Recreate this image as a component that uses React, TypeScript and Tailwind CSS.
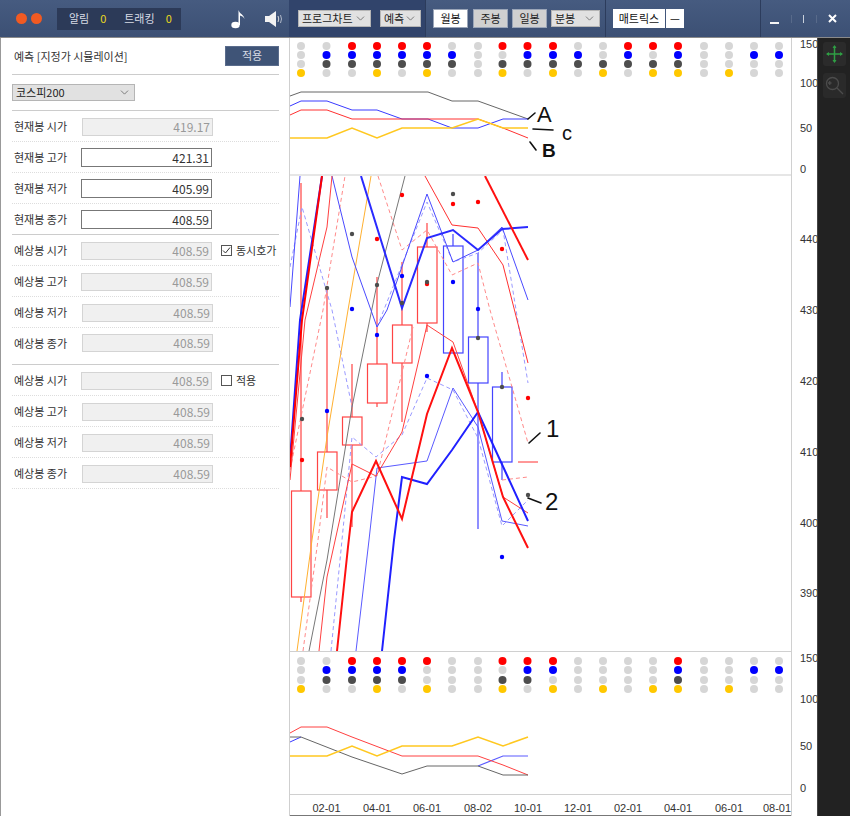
import { ChevronDown } from "lucide-react";

const FONT = "font-['Noto_Sans_CJK_KR','Liberation_Sans',sans-serif]";

type Line = { pts: string; color: string; w?: number; dash?: boolean; o?: number };

const COLS = [301, 326.5, 352, 377, 402, 427, 452, 478, 502.5, 527.5, 553, 578, 603, 628, 653, 678, 704, 729, 754, 779];

const C: Record<string, string> = { g: "#d6d6d6", r: "#ff0000", b: "#0000ff", d: "#4d4d4d", y: "#ffc800" };

const TOP_DOTS: [number, string][] = [
  [46, "ggrrrrggrrrggrrrgggg"],
  [55, "gbbbbbbggbbbgbgbggbb"],
  [64, "gddddddgddddddddgggg"],
  [73, "yggygyggygygygyygygg"],
];

const BOTTOM_DOTS: [number, string][] = [
  [661, "ggrrrrggrrrggggrgggg"],
  [670, "gbbbbggggbbggggbggbb"],
  [680, "gddddgggddgggggdgggg"],
  [689, "yggygyggygygygyygygg"],
];

const TOP_LINES: Line[] = [
  { pts: "290,96 301,92 428,92 452,101 478,101 528,119", color: "#666666" },
  { pts: "290,106 301,101 327,101 352,110 377,110 402,119 428,119 452,128 478,128 503,119 528,119", color: "#3a3aff" },
  { pts: "290,115 301,110 327,110 352,119 478,119 503,128 528,138", color: "#ff3030" },
  { pts: "290,138 327,138 352,128 377,138 402,128 452,128 478,119 503,128 528,128", color: "#ffc820", w: 1.6 },
];

const BOTTOM_LINES: Line[] = [
  { pts: "290,742 301,737", color: "#3a3aff" },
  { pts: "478,766 503,756 528,756", color: "#5a5aff", w: 1.2 },
  { pts: "290,733 301,727 327,727 352,737 402,756 478,756 503,765 528,775", color: "#ff4040" },
  { pts: "290,737 301,737 352,757 402,774 427,766 478,766 503,775 528,775", color: "#666666" },
  { pts: "290,756 327,756 352,746 377,756 402,746 452,746 478,737 503,746 528,737", color: "#ffc820", w: 1.6 },
];

const MAIN_LINES: Line[] = [
  // 점선
  { pts: "378,176 402,250 427,230 452,275 478,263 490,310 528,443", color: "#ff8a8a", dash: true },
  { pts: "290,470 323,310 345,176", color: "#ff8a8a", dash: true },
  { pts: "303,651 318,540 327,467 352,482 377,476 413,327", color: "#ff8a8a", dash: true },
  { pts: "502,480 528,477", color: "#ff8a8a", dash: true },
  { pts: "331,651 342,540 352,437 376,457 402,435 427,378 453,390 478,438 502,526 528,500", color: "#9a9aff", dash: true },
  { pts: "290,267 302,207 332,310 352,407", color: "#9a9aff", dash: true },
  { pts: "377,327 427,202 453,262 478,253 503,230 528,383", color: "#9a9aff", dash: true },
  // 실선
  { pts: "297,651 312,540 327,437 348,310 371,176", color: "#ffb030" },
  { pts: "309,651 327,560 352,407 377,284 405,176", color: "#777777" },
  { pts: "290,307 300,176", color: "#4a4aff" },
  { pts: "332,176 352,257 377,327 387,310 427,194 453,262 478,250 502,227 528,300", color: "#4a4aff" },
  { pts: "356,651 369,540 377,468 427,461 453,388 478,427 502,521 528,526", color: "#5a5aff" },
  { pts: "319,651 327,577 352,464 376,476 402,432 427,325 453,342 478,412 503,497 528,513", color: "#ff4040" },
  { pts: "290,480 305,320 327,227 332,176", color: "#ff4040" },
  { pts: "425,176 452,225 478,228 503,265 517,320 528,363", color: "#ff3030" },
  { pts: "290,460 300,320 322,176", color: "#2020ff", w: 2 },
  { pts: "290,467 302,320 322,176", color: "#ff0000", w: 2 },
  { pts: "361,176 402,308 427,238 453,230 478,250 502,229 528,227", color: "#2a2aff", w: 2 },
  { pts: "382,651 394,540 402,477 427,484 452,450 478,412 528,521", color: "#2020ff", w: 2 },
  { pts: "337,651 348,547 352,512 376,461 402,519 427,414 452,348 478,412 503,497 528,548", color: "#ff1010", w: 2 },
  { pts: "485,176 528,260", color: "#ff1010", w: 2 },
];

// x, 몸통 위, 몸통 아래, 꼬리 위, 꼬리 아래
const CANDLES: [number, number, number, number, number, string][] = [
  [301, 491, 597, 183, 602, "#ff3030"],
  [327, 452, 490, 287, 518, "#ff3030"],
  [352, 417, 445, 364, 527, "#ff3030"],
  [377, 364, 403, 277, 407, "#ff3030"],
  [402, 325, 363, 262, 422, "#ff3030"],
  [427, 247, 323, 223, 332, "#ff3030"],
  [453, 246, 353, 234, 353, "#3030ff"],
  [478, 337, 383, 253, 529, "#3030ff"],
  [502, 387, 462, 372, 480, "#3030ff"],
];

const SCATTER: [number, number, string][] = [
  [402, 195, "r"], [453, 204, "r"], [478, 202, "r"], [377, 239, "r"], [502, 249, "r"], [427, 284, "r"], [302, 460, "r"], [528, 398, "r"],
  [453, 194, "d"], [352, 234, "d"], [327, 288, "d"], [377, 285, "d"], [427, 282, "d"], [402, 303, "d"], [302, 419, "d"], [478, 338, "d"], [502, 387, "d"], [528, 495, "d"],
  [402, 276, "b"], [453, 282, "b"], [352, 309, "b"], [478, 309, "b"], [377, 335, "b"], [327, 411, "b"], [427, 376, "b"], [502, 557, "b"],
];

const AXIS: [number, string][] = [
  [44, "150"], [83, "100"], [128, "50"], [169, "0"],
  [239, "440"], [310, "430"], [381, "420"], [452, "410"], [523, "400"], [593, "390"],
  [658, "150"], [699, "100"], [746, "50"], [788, "0"],
];

const DATES: [number, string][] = [
  [326.5, "02-01"], [377, "04-01"], [427, "06-01"], [478, "08-02"], [528, "10-01"], [578, "12-01"],
  [628, "02-01"], [678, "04-01"], [729, "06-01"], [777, "08-01"],
];

function Polylines({ lines }: { lines: Line[] }) {
  return (
    <>
      {lines.map((l, i) => (
        <polyline
          key={i}
          points={l.pts}
          fill="none"
          stroke={l.color}
          strokeWidth={l.w ?? 1}
          strokeDasharray={l.dash ? "4 3" : undefined}
        />
      ))}
    </>
  );
}

function DotRows({ rows }: { rows: [number, string][] }) {
  return (
    <>
      {rows.flatMap(([y, s]) =>
        COLS.map((x, i) => <circle key={`${y}-${i}`} cx={x} cy={y} r={4} fill={C[s[i]]} />)
      )}
    </>
  );
}

function Chart() {
  return (
    <svg width={527} height={778} viewBox="290 38 527 778" className="block shrink-0">
      <rect x={290} y={38} width={527} height={778} fill="#ffffff" />
      <DotRows rows={TOP_DOTS} />
      <Polylines lines={TOP_LINES} />
      <line x1={290} y1={175} x2={791} y2={175} stroke="#e6e6e6" strokeWidth={2} />

      <svg x={290} y={176} width={501} height={475} viewBox="290 176 501 475">
        {CANDLES.map(([x, top, bot, wt, wb, c], i) => (
          <g key={i} stroke={c} strokeWidth={1.2} fill="none" opacity={0.9}>
            <line x1={x} y1={wt} x2={x} y2={top} />
            <line x1={x} y1={bot} x2={x} y2={wb} />
            <rect x={x - 9.5} y={top} width={19.5} height={bot - top} />
          </g>
        ))}
        <line x1={518} y1={462} x2={538} y2={462} stroke="#ff3030" />
        <Polylines lines={MAIN_LINES} />
        {SCATTER.map(([x, y, c], i) => (
          <circle key={i} cx={x} cy={y} r={2.2} fill={C[c]} />
        ))}
      </svg>

      <line x1={290} y1={651.5} x2={791} y2={651.5} stroke="#d0d0d0" />
      <DotRows rows={BOTTOM_DOTS} />
      <Polylines lines={BOTTOM_LINES} />
      <line x1={290} y1={794.5} x2={791} y2={794.5} stroke="#d0d0d0" />
      <line x1={290} y1={815.5} x2={791} y2={815.5} stroke="#777777" />
      <line x1={791.5} y1={38} x2={791.5} y2={816} stroke="#d0d0d0" />

      {AXIS.map(([y, t], i) => (
        <text key={i} x={800} y={y + 4} fontSize={11} fill="#333333" fontFamily="Liberation Sans, sans-serif">
          {t}
        </text>
      ))}
      {DATES.map(([x, t], i) => (
        <text key={i} x={x} y={812} fontSize={11} fill="#333333" textAnchor="middle" fontFamily="Liberation Sans, sans-serif">
          {t}
        </text>
      ))}

      {/* 손글씨 표시 */}
      <g stroke="#111111" strokeWidth={1.6} fill="none" strokeLinecap="round">
        <path d="M528 119 L535 113" />
        <path d="M533 129 L553 130" />
        <path d="M530 142 L536 150" />
        <path d="M529 443 L540 433" />
        <path d="M528 498 L541 503" />
      </g>
      <g fill="#111111" fontFamily="Liberation Sans, sans-serif">
        <text x={537} y={122} fontSize={22}>A</text>
        <text x={542} y={157} fontSize={19} fontWeight={700}>B</text>
        <text x={562} y={140} fontSize={20}>c</text>
        <text x={546} y={437} fontSize={24}>1</text>
        <text x={545} y={510} fontSize={24}>2</text>
      </g>
    </svg>
  );
}

function Select({ label, className }: { label: string; className: string }) {
  return (
    <div className={`flex items-center justify-between whitespace-nowrap bg-[#e1e1e1] border border-[#b5b5b5] pl-[3px] pr-[3px] text-[11px] text-[#222] ${className}`}>
      <span className="leading-none">{label}</span>
      <ChevronDown size={13} strokeWidth={1.5} className="text-[#666] shrink-0" />
    </div>
  );
}

function Divider() {
  return <div className="w-px h-full bg-[#2c3c5c]" />;
}

function PeriodButton({ label, active, className }: { label: string; active?: boolean; className: string }) {
  return (
    <div
      className={`h-[19px] flex items-center justify-center text-[11px] border border-[#9aa5b8] ${active ? "bg-white text-[#111]" : "bg-[#d0d0d0] text-[#222]"} ${className}`}
    >
      {label}
    </div>
  );
}

function Header() {
  return (
    <div className="flex h-[38px] shrink-0 border-b border-[#8a8a8a] bg-gradient-to-b from-[#465b80] to-[#3c5074]">
      <div className="w-[289px] shrink-0 flex items-center pl-[16px]">
        <div className="flex gap-[4px]">
          <div className="w-[11px] h-[11px] rounded-full bg-[#f15a22]" />
          <div className="w-[11px] h-[11px] rounded-full bg-[#f15a22]" />
        </div>
        <div className="ml-[15px] w-[124px] h-[22px] bg-[#2c3a58] flex items-center text-[11px] text-[#d8dce6] pl-[12px]">
          <span>알림</span>
          <span className="ml-[11px] w-[10px] text-[#e8d820]">0</span>
          <span className="ml-[14px]">트래킹</span>
          <span className="ml-[11px] text-[#e8d820]">0</span>
        </div>
        <svg width={16} height={20} viewBox="0 0 16 20" className="ml-[50px]">
          <ellipse cx={4.5} cy={16} rx={4.2} ry={3.2} fill="#ffffff" />
          <path d="M7.5 16 V1 C8.5 5 13 5.5 13.5 10 C12.5 7.5 10.5 7 9 6.5 V16 Z" fill="#ffffff" />
        </svg>
        <svg width={18} height={16} viewBox="0 0 18 16" className="ml-[18px]">
          <path d="M0 5 H4 L11 0 V16 L4 11 H0 Z" fill="#f2f2f2" />
          <path d="M13 5 Q14.5 8 13 11" stroke="#d8d8d8" strokeWidth={1} fill="none" />
          <path d="M15.5 4 Q17.5 8 15.5 12" stroke="#b0b8c8" strokeWidth={1} fill="none" />
        </svg>
      </div>
      <div className="w-[136px] shrink-0 bg-[#31446b] flex items-center pl-[9px] gap-[9px]">
        <Select label="프로그차트" className="w-[73px] h-[17px]" />
        <Select label="예측" className="w-[41px] h-[17px]" />
      </div>
      <Divider />
      <div className="w-[179px] shrink-0 flex items-center pl-[7px]">
        <PeriodButton label="월봉" active className="w-[35px]" />
        <PeriodButton label="주봉" className="w-[35px] ml-[5px]" />
        <PeriodButton label="일봉" className="w-[35px] ml-[4px]" />
        <Select label="분봉" className="w-[49px] h-[17px] ml-[4px]" />
      </div>
      <Divider />
      <div className="w-[154px] shrink-0 flex items-center pl-[7px]">
        <div className="w-[52px] h-[19px] bg-white flex items-center justify-center text-[11px] text-[#111]">매트릭스</div>
        <div className="ml-px w-[18px] h-[19px] bg-white flex items-center justify-center text-[11px] text-[#111]">—</div>
      </div>
      <Divider />
      <div className="flex-1 flex items-center justify-between pl-[9px] pr-[13px] text-white">
        <div className="w-[9px] h-[2px] mt-[8px] bg-[#f4f4f4]" />
        <div className="w-px h-[8px] bg-[#586a8a]" />
        <div className="w-px h-[8px] bg-[#c8d0dc]" />
        <div className="w-px h-[8px] bg-[#586a8a]" />
        <svg width={9} height={9} viewBox="0 0 9 9">
          <path d="M1 1 L8 8 M8 1 L1 8" stroke="#ffffff" strokeWidth={2} />
        </svg>
      </div>
    </div>
  );
}

function PriceRow({
  label,
  value,
  editable,
  nudge,
  check,
  checked,
  solid,
}: {
  label: string;
  value: string;
  editable?: boolean;
  nudge?: boolean;
  check?: string;
  checked?: boolean;
  solid?: boolean;
}) {
  return (
    <div className={`h-[31px] pt-px flex items-center ${solid ? "border-b border-[#cccccc]" : "border-b border-dotted border-[#dddddd]"}`}>
      <span className="w-[69px] text-[11px] text-[#333] pl-[2px]">{label}</span>
      <div
        className={
          editable
            ? "w-[131px] h-[19px] bg-white border border-[#777] flex items-center justify-end pr-[2px] text-[12px] text-[#333]"
            : `${nudge ? "ml-px" : ""} w-[131px] h-[18px] bg-[#f0f0f0] border border-[#d4d4d4] flex items-center justify-end pr-[2px] text-[12px] text-[#999]`
        }
      >
        {value}
      </div>
      {check && (
        <div className="flex items-center ml-[9px] text-[11px] text-[#333]">
          <div className="w-[11px] h-[11px] border border-[#555] bg-white flex items-center justify-center mr-[4px]">
            {checked && (
              <svg width={9} height={9} viewBox="0 0 9 9">
                <path d="M1 4.5 L3.5 7 L8 1.5" stroke="#333" strokeWidth={1} fill="none" />
              </svg>
            )}
          </div>
          {check}
        </div>
      )}
    </div>
  );
}

function Sidebar() {
  return (
    <div className="w-[290px] shrink-0 border-l border-l-[#999] border-r border-r-[#cfcfcf] bg-white pl-[11px] pr-[10px] flex flex-col">
      <div className="h-[37px] flex items-center justify-between border-b border-[#cccccc] pr-0">
        <span className="text-[11px] text-[#333] pl-[2px]">예측 [지정가 시뮬레이션]</span>
        <div className="w-[54px] h-[20px] -mt-[1px] bg-[#3f5477] border border-[#5a6c8c] flex items-center justify-center text-[11px] text-[#d5dae4]">
          적용
        </div>
      </div>
      <div className="h-[36px] flex items-center border-b border-[#cccccc]">
        <Select label="코스피200" className="w-[123px] h-[17px] text-[11px]" />
      </div>
      <PriceRow label="현재봉 시가" value="419.17" nudge />
      <PriceRow label="현재봉 고가" value="421.31" editable />
      <PriceRow label="현재봉 저가" value="405.99" editable />
      <PriceRow label="현재봉 종가" value="408.59" editable solid />
      <PriceRow label="예상봉 시가" value="408.59" check="동시호가" checked />
      <PriceRow label="예상봉 고가" value="408.59" />
      <PriceRow label="예상봉 저가" value="408.59" nudge />
      <div className="h-[37px] pt-[6px] flex items-start border-b border-[#cccccc]">
        <span className="w-[69px] text-[11px] leading-[18px] text-[#333] pl-[2px]">예상봉 종가</span>
        <div className="ml-px w-[131px] h-[18px] bg-[#f0f0f0] border border-[#d4d4d4] flex items-center justify-end pr-[2px] text-[12px] text-[#999]">
          408.59
        </div>
      </div>
      <PriceRow label="예상봉 시가" value="408.59" check="적용" />
      <PriceRow label="예상봉 고가" value="408.59" nudge />
      <PriceRow label="예상봉 저가" value="408.59" nudge />
      <PriceRow label="예상봉 종가" value="408.59" nudge />
    </div>
  );
}

function Toolbar() {
  return (
    <div className="flex-1 bg-[#222222] border-l border-[#444] flex flex-col items-center pt-[4px] gap-[7px]">
      <div className="w-[23px] h-[24px] rounded-[3px] bg-[#2b2b2b] flex items-center justify-center">
        <svg width={17} height={18} viewBox="0 0 17 18" fill="none">
          <path d="M8.5 1 V17 M1 9 H16" stroke="#2f9e44" strokeWidth={1.5} />
          <path d="M8.5 0 L10.5 3 H6.5 Z M8.5 18 L10.5 15 H6.5 Z M0 9 L3 7 V11 Z M17 9 L14 7 V11 Z" fill="#2f9e44" />
        </svg>
      </div>
      <div className="w-[23px] h-[25px] rounded-[3px] bg-[#2a2a2a] flex items-center justify-center">
        <svg width={19} height={19} viewBox="0 0 19 19" fill="none" stroke="#4c4c4c" strokeWidth={1.3}>
          <circle cx={7.5} cy={7.5} r={6} />
          <path d="M12 12 L18 18 M3 7 H6.5 M4.7 5 V9" />
        </svg>
      </div>
    </div>
  );
}

export default function App() {
  return (
    <div className={`w-[850px] h-[816px] overflow-hidden flex flex-col bg-white ${FONT}`}>
      <Header />
      <div className="flex flex-1 min-h-0">
        <Sidebar />
        <Chart />
        <Toolbar />
      </div>
    </div>
  );
}
